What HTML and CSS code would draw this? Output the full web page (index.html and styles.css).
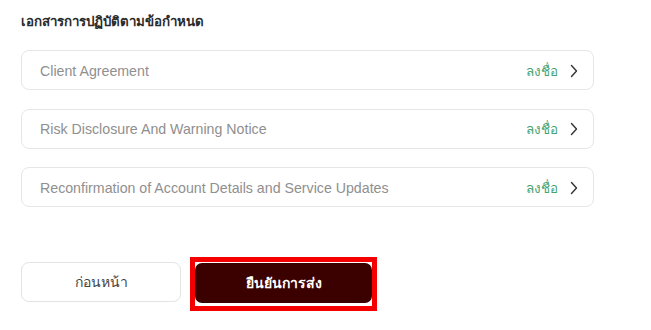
FILE: index.html
```html
<!DOCTYPE html>
<html lang="th">
<head>
<meta charset="utf-8">
<title>เอกสาร</title>
<link rel="stylesheet" href="styles.css">
</head>
<body>
<main class="page">
  <h2 class="title">เอกสารการปฏิบัติตามข้อกำหนด</h2>
  <ul class="docs">
    <li class="doc">
      <span class="doc-name">Client Agreement</span>
      <span class="doc-action">ลงชื่อ
        <svg class="chev" width="8" height="14" viewBox="0 0 8 14"><path d="M1.5 1.5 L6.5 7 L1.5 12.5" fill="none" stroke="#333" stroke-width="1.4" stroke-linecap="round" stroke-linejoin="round"/></svg>
      </span>
    </li>
    <li class="doc">
      <span class="doc-name">Risk Disclosure And Warning Notice</span>
      <span class="doc-action">ลงชื่อ
        <svg class="chev" width="8" height="14" viewBox="0 0 8 14"><path d="M1.5 1.5 L6.5 7 L1.5 12.5" fill="none" stroke="#333" stroke-width="1.4" stroke-linecap="round" stroke-linejoin="round"/></svg>
      </span>
    </li>
    <li class="doc">
      <span class="doc-name">Reconfirmation of Account Details and Service Updates</span>
      <span class="doc-action">ลงชื่อ
        <svg class="chev" width="8" height="14" viewBox="0 0 8 14"><path d="M1.5 1.5 L6.5 7 L1.5 12.5" fill="none" stroke="#333" stroke-width="1.4" stroke-linecap="round" stroke-linejoin="round"/></svg>
      </span>
    </li>
  </ul>
  <div class="actions">
    <button class="btn btn-prev" type="button">ก่อนหน้า</button>
    <span class="highlight">
      <button class="btn btn-submit" type="button">ยืนยันการส่ง</button>
    </span>
  </div>
</main>
</body>
</html>
```
FILE: styles.css
```css
* { box-sizing: border-box; }
html, body { margin: 0; padding: 0; background: #fff; }
body {
  font-family: "Liberation Sans", Arial, "Noto Sans", sans-serif;
  color: #333;
}
.page {
  padding: 12px 0 0 21px;
  width: 594px;
}
.title {
  margin: 0 0 18px 0;
  font-size: 13.3px;
  line-height: 20px;
  font-weight: 600;
  color: #2b2b2b;
}
.docs {
  list-style: none;
  margin: 0;
  padding: 0;
  display: flex;
  flex-direction: column;
  gap: 18.5px;
}
.doc {
  height: 40px;
  border: 1px solid #e6e6e6;
  border-radius: 8px;
  display: flex;
  align-items: center;
  justify-content: space-between;
  padding: 1px 15px 0 18px;
}
.doc-name {
  font-size: 14.2px;
  color: #8f8f8f;
}
.doc-action {
  display: flex;
  align-items: center;
  gap: 12px;
  font-size: 13.5px;
  color: #4aa36f;
}
.chev { display: block; }
.actions {
  margin-top: 50px;
  display: flex;
  align-items: flex-start;
}
.btn {
  font-family: inherit;
  font-size: 14px;
  height: 40px;
  border-radius: 7px;
  cursor: pointer;
}
.btn-prev {
  margin-top: 5px;
  width: 160px;
  background: #fff;
  border: 1px solid #e3e3e3;
  color: #444;
  border-radius: 8px;
}
.highlight {
  margin-left: 9px;
  display: inline-flex;
  border: 5px solid #f50000;
  padding: 1px 0 3px 0;
}
.btn-submit {
  width: 177px;
  background: #3b0000;
  border: none;
  color: #fff;
  font-weight: 700;
}
```
